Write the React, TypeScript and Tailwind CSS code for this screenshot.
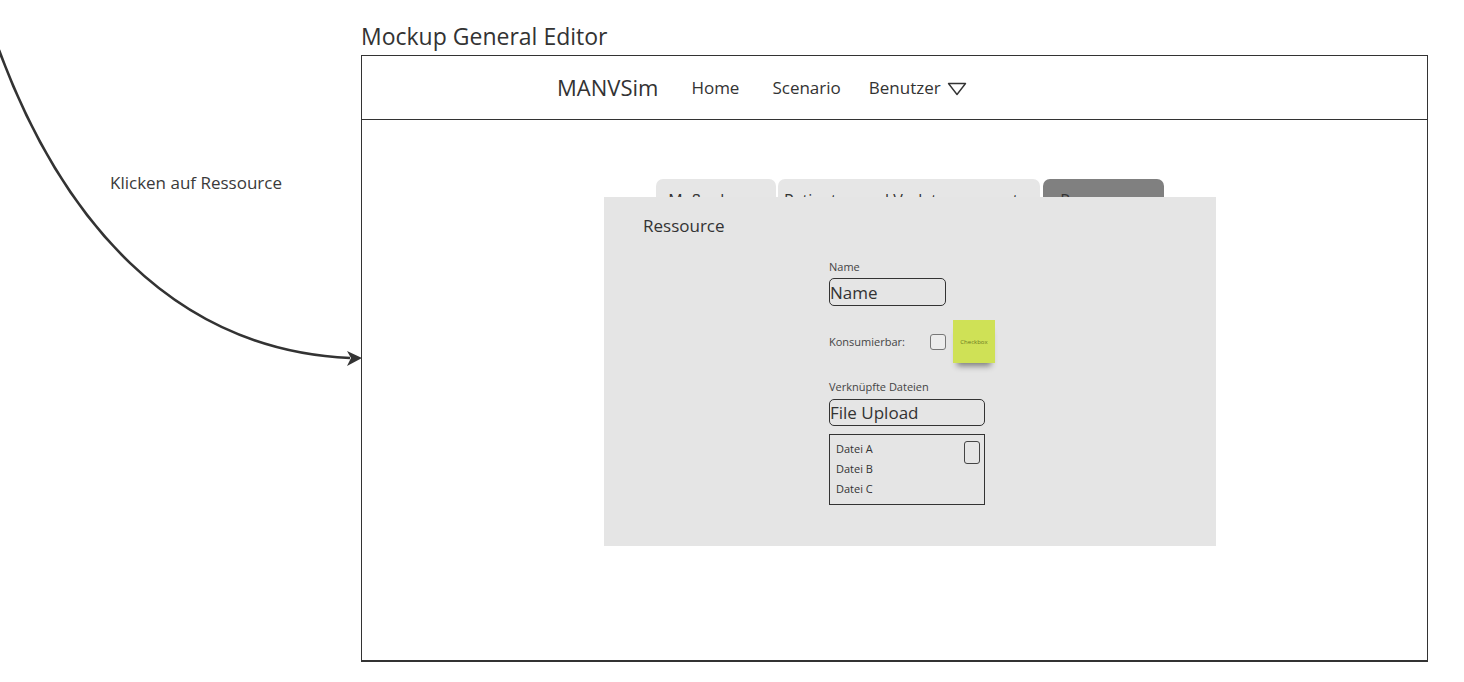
import React from 'react';

const font = { fontFamily: '"Open Sans", "Liberation Sans", sans-serif' };

function Tab({ label, active, width }: { label: string; active?: boolean; width: string }) {
  return (
    <div
      className={`${width} flex h-[18px] justify-center overflow-hidden rounded-t-[7px] pt-[13px] text-[16px] leading-none ${
        active ? 'bg-[#808080] text-[#333]' : 'bg-[#e6e6e6] text-[#333]'
      }`}
    >
      <span className="whitespace-nowrap">{label}</span>
    </div>
  );
}

export default function App() {
  return (
    <div className="relative w-[1464px] h-[682px] bg-white text-[#333] overflow-hidden" style={font}>
      {/* connector arrow from the previous screen */}
      <svg className="absolute inset-0 pointer-events-none" width="1464" height="682">
        <path d="M -1 50 C 60 215, 170 350, 350 358" fill="none" stroke="#333" strokeWidth="2.6" />
        <polygon points="362,358 347,351 351,358 347,366" fill="#333" />
      </svg>
      <div className="absolute left-[110px] top-[173px] text-[17px] leading-[20px] text-[#3a3a3a]">Klicken auf Ressource</div>

      <div className="flex flex-col pl-[361px] pt-[25px]">
        <div className="text-[23px] leading-[23px] text-[#333]">Mockup General Editor</div>

        <div className="mt-[7px] flex h-[607px] w-[1067px] flex-col border border-b-2 border-[#333]">
          {/* header */}
          <div className="flex h-[64px] shrink-0 items-center border-b border-[#333] pl-[195px]">
            <span className="text-[22px]">MANVSim</span>
            <span className="ml-[33px] text-[17px]">Home</span>
            <span className="ml-[33px] text-[17px]">Scenario</span>
            <span className="ml-[28px] text-[17px]">Benutzer</span>
            <svg className="ml-[6px] mt-[2px]" width="20" height="14" viewBox="0 0 20 14">
              <polygon points="1.5,1.5 18.5,1.5 10,12.5" fill="none" stroke="#333" strokeWidth="1.4" strokeLinejoin="round" />
            </svg>
          </div>

          {/* content */}
          <div className="flex flex-col pl-[242px] pt-[59px]">
            <div className="ml-[52px] flex gap-[2px]">
              <Tab label="Maßnahmen" width="w-[120px]" />
              <Tab label="Patienten und Verletzungsmuster" width="w-[262px]" />
              <div className="ml-[1px] flex">
                <Tab label="Ressourcen" width="w-[121px]" active />
              </div>
            </div>

            <div className="flex h-[349px] w-[612px] flex-col bg-[#e5e5e5]">
              <div className="pl-[39px] pt-[20px] text-[17px] leading-none">Ressource</div>

              <div className="ml-[225px] mt-[27px] flex flex-col">
                <div className="text-[11px] leading-none text-[#444]">Name</div>
                <div className="mt-[6px] flex h-[28px] w-[117px] items-center rounded-[5px] border border-[#333] text-[17px] leading-none">
                  Name
                </div>

                <div className="mt-[14px] flex h-[43px] items-center">
                  <span className="text-[11px] leading-none text-[#444]">Konsumierbar:</span>
                  <div className="ml-[25px] h-[16px] w-[16px] rounded-[3px] border border-[#777] bg-[#ececec]" />
                  <div className="ml-[7px] flex h-[43px] w-[42px] items-center justify-center bg-[#cfe156] text-[6px] leading-none text-[#6b7a22] shadow-[0_7px_6px_-4px_rgba(0,0,0,0.45)]">
                    Checkbox
                  </div>
                </div>

                <div className="mt-[18px] text-[11px] leading-none text-[#444]">Verknüpfte Dateien</div>
                <div className="mt-[7px] flex h-[27px] w-[156px] items-center rounded-[5px] border border-[#333] text-[17px] leading-none">
                  File Upload
                </div>

                <div className="relative mt-[8px] h-[71px] w-[156px] border border-[#333] pl-[6px] pt-[4px] text-[11px] leading-[20px] text-[#333]">
                  <div>Datei A</div>
                  <div>Datei B</div>
                  <div>Datei C</div>
                  <div className="absolute right-[4px] top-[6px] h-[23px] w-[16px] rounded-[3px] border border-[#444]" />
                </div>
              </div>
            </div>
          </div>
        </div>
      </div>
    </div>
  );
}
